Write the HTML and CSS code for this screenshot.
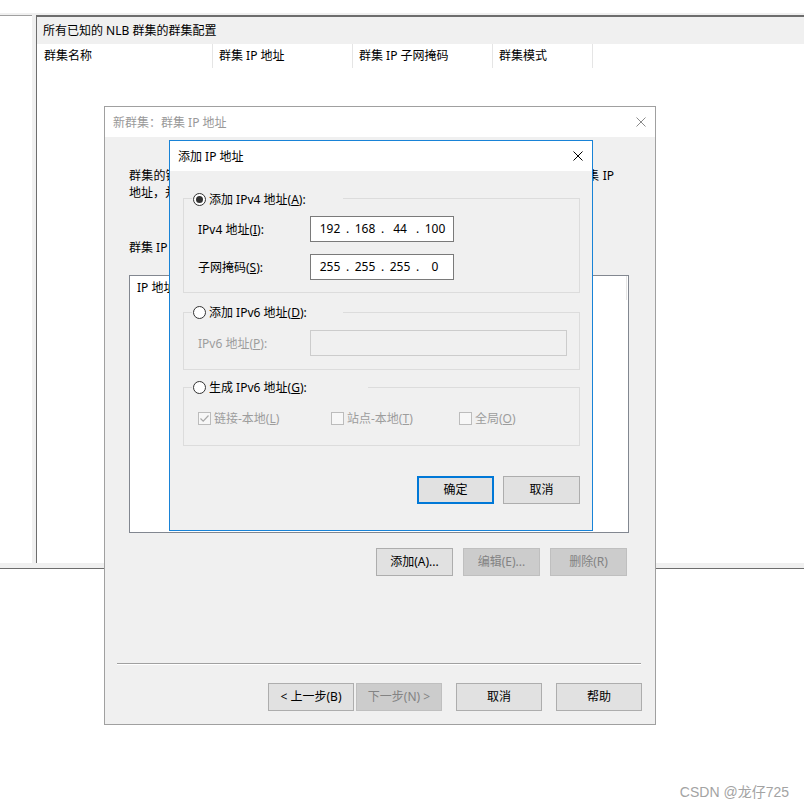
FILE: index.html
```html
<!DOCTYPE html>
<html lang="zh-CN">
<head>
<meta charset="utf-8">
<title>NLB</title>
<link rel="stylesheet" href="styles.css">
</head>
<body>
<div class="frame">
  <div class="side-pane"></div>
  <div class="main-pane">
    <div class="pane-title">所有已知的 NLB 群集的群集配置</div>
    <div class="col-head">
      <div class="col c1">群集名称</div>
      <div class="col c2">群集 IP 地址</div>
      <div class="col c3">群集 IP 子网掩码</div>
      <div class="col c4">群集模式</div>
    </div>
  </div>
</div>

<div class="wizard">
  <div class="wiz-title">
    <span>新群集：群集 IP 地址</span>
    <svg class="x-icon" width="10" height="10" viewBox="0 0 10 10"><path d="M0.5 0.5 L9.5 9.5 M9.5 0.5 L0.5 9.5" stroke="#8a8a8a" stroke-width="1" fill="none"/></svg>
  </div>
  <div class="wiz-body">
    <p class="intro">
      <span class="intro-l1">群集的链路负载平衡使用以下列出的所有 IP 地址，其中第一个地址将被用来作为主群集 IP</span>
      <span class="intro-l2">地址，并为其</span>
    </p>
    <div class="label-ip">群集 IP 地址(<u>I</u>):</div>
    <div class="list">
      <div class="list-head"><div class="list-col">IP 地址</div></div>
    </div>
    <div class="btn-row">
      <button class="btn">添加(A)...</button>
      <button class="btn disabled">编辑(E)...</button>
      <button class="btn disabled">删除(R)</button>
    </div>
  </div>
  <div class="wiz-footer">
    <div class="sep"></div>
    <div class="footer-btns">
      <button class="btn wide">&lt; 上一步(B)</button>
      <button class="btn wide disabled gap-s">下一步(N) &gt;</button>
      <button class="btn wide gap-l">取消</button>
      <button class="btn wide gap-l">帮助</button>
    </div>
  </div>
</div>

<div class="add-dialog">
  <div class="add-title">
    <span>添加 IP 地址</span>
    <svg class="x-icon" width="10" height="10" viewBox="0 0 10 10"><path d="M0.5 0.5 L9.5 9.5 M9.5 0.5 L0.5 9.5" stroke="#000" stroke-width="1" fill="none"/></svg>
  </div>
  <div class="add-body">
    <fieldset class="grp g1">
      <legend class="lg"><span class="radio-label"><span class="radio on"></span>添加 IPv4 地址(<u>A</u>):</span></legend>
      <div class="field-row">
        <div class="field-label">IPv4 地址(<u>I</u>):</div>
        <div class="ip-box">
          <span class="oct">192</span><span class="dot">.</span><span class="oct">168</span><span class="dot">.</span><span class="oct">44</span><span class="dot">.</span><span class="oct">100</span>
        </div>
      </div>
      <div class="field-row row2">
        <div class="field-label">子网掩码(<u>S</u>):</div>
        <div class="ip-box">
          <span class="oct">255</span><span class="dot">.</span><span class="oct">255</span><span class="dot">.</span><span class="oct">255</span><span class="dot">.</span><span class="oct">0</span>
        </div>
      </div>
    </fieldset>

    <fieldset class="grp g2">
      <legend class="lg"><span class="radio-label"><span class="radio"></span>添加 IPv6 地址(<u>D</u>):</span></legend>
      <div class="field-row">
        <div class="field-label dim">IPv6 地址(<u>P</u>):</div>
        <div class="ip6-box"></div>
      </div>
    </fieldset>

    <fieldset class="grp g3">
      <legend class="lg wide-lg"><span class="radio-label"><span class="radio"></span>生成 IPv6 地址(<u>G</u>):</span></legend>
      <div class="check-row">
        <div class="chk-item i1"><span class="chk"><svg width="11" height="11" viewBox="0 0 11 11"><path d="M1.5 5.5 L4.2 8.2 L9.5 2.5" stroke="#a8a8a8" stroke-width="1.2" fill="none"/></svg></span><span class="dim">链接-本地(<u>L</u>)</span></div>
        <div class="chk-item i2"><span class="chk"></span><span class="dim">站点-本地(<u>T</u>)</span></div>
        <div class="chk-item"><span class="chk"></span><span class="dim">全局(<u>O</u>)</span></div>
      </div>
    </fieldset>

    <div class="add-btns">
      <button class="btn focus">确定</button>
      <button class="btn">取消</button>
    </div>
  </div>
</div>

<div class="watermark">CSDN @龙仔725</div>
</body>
</html>
```

FILE: styles.css
```css
* { box-sizing: border-box; }
html, body { margin: 0; padding: 0; }
body {
  width: 804px;
  height: 808px;
  overflow: hidden;
  position: relative;
  background: #fff;
  font-family: "Noto Sans", "Noto Sans CJK SC", sans-serif;
  font-size: 12px;
  color: #000;
}
u { text-decoration: underline; text-underline-offset: 1px; }

/* background console */
.frame {
  margin-top: 13px;
  height: 556px;
  padding: 2px 0 5px;
  border-bottom: 1px solid #6d6d6d;
  background: #f0f0f0;
  display: flex;
  gap: 4px;
}
.side-pane {
  width: 32px;
  background: #fff;
  border-top: 1px solid #a0a0a0;
}
.main-pane {
  flex: 1;
  background: #fff;
  border-top: 2px solid #6d6d6d;
  border-left: 1px solid #6d6d6d;
}
.pane-title {
  height: 27px;
  line-height: 27px;
  padding-left: 6px;
  background: #f0f0f0;
}
.col-head { display: flex; height: 24px; }
.col {
  line-height: 24px;
  border-right: 1px solid #e5e5e5;
  padding-left: 6px;
  white-space: nowrap;
}
.c1 { width: 176px; padding-left: 7px; }
.c2 { width: 140px; }
.c3 { width: 140px; }
.c4 { width: 100px; }

/* wizard window */
.wizard {
  position: absolute;
  left: 104px;
  top: 106px;
  width: 552px;
  height: 619px;
  border: 1px solid #a0a0a0;
  background: #f0f0f0;
  display: flex;
  flex-direction: column;
}
.wiz-title {
  flex: none;
  height: 30px;
  background: #fff;
  color: #999;
  display: flex;
  align-items: center;
  justify-content: space-between;
  padding: 0 9px 0 8px;
}
.x-icon { display: block; }
.wiz-body {
  flex: 1;
  padding: 30px 0 0 24px;
}
.intro { margin: 0; width: 485px; line-height: 17px; }
.intro-l1 {
  display: block;
  white-space: nowrap;
  text-align: justify;
  text-align-last: justify;
}
.intro-l2 { display: block; white-space: nowrap; }
.label-ip { margin-top: 38px; line-height: 17px; }
.list {
  margin-top: 19px;
  width: 500px;
  height: 258px;
  border: 1px solid #828790;
  background: #fff;
}
.list-head { display: flex; height: 24px; }
.list-col {
  flex: 1;
  line-height: 24px;
  padding-left: 7px;
  border-right: 1px solid #e5e5e5;
  margin-right: 1px;
}
.btn-row {
  margin-top: 15px;
  width: 500px;
  padding-right: 2px;
  display: flex;
  justify-content: flex-end;
  gap: 10px;
}
.btn {
  width: 77px;
  height: 28px;
  padding: 0;
  margin: 0;
  border: 1px solid #adadad;
  background: #e1e1e1;
  font-family: inherit;
  font-size: 12px;
  line-height: 26px;
  color: #000;
  text-align: center;
}
.btn.disabled {
  background: #cccccc;
  border-color: #bfbfbf;
  color: #838383;
}
.btn.focus {
  border: 2px solid #0078d7;
  line-height: 24px;
}
.btn.wide { width: 86px; }
.gap-s { margin-left: 2px; }
.gap-l { margin-left: 14px; }

.wiz-footer {
  flex: none;
  padding: 0 13px 13px 12px;
}
.sep {
  height: 2px;
  margin-right: 1px;
  border-top: 1px solid #a0a0a0;
  border-bottom: 1px solid #fff;
}
.footer-btns {
  margin-top: 18px;
  display: flex;
  justify-content: flex-end;
}

/* add ip dialog */
.add-dialog {
  position: absolute;
  left: 169px;
  top: 140px;
  width: 424px;
  height: 391px;
  border: 1px solid #1883d7;
  background: #f0f0f0;
  display: flex;
  flex-direction: column;
}
.add-title {
  flex: none;
  height: 30px;
  background: #fff;
  display: flex;
  align-items: center;
  justify-content: space-between;
  padding: 0 9px 0 8px;
}
.add-body {
  flex: 1;
  padding: 19px 12px 0 13px;
}
.grp {
  margin: 0;
  min-width: 0;
  border: 1px solid #dcdcdc;
  padding: 9px 12px 12px 8px;
}
.g2 { margin-top: 11px; padding: 9px 12px 13px 8px; }
.g3 { margin-top: 9px; padding: 14px 12px 18px 8px; }
.lg {
  padding: 0 0 0 1px;
  width: 151px;
  height: 17px;
  line-height: 17px;
}
.wide-lg { width: 176px; }
.radio-label {
  display: inline-flex;
  align-items: center;
  height: 17px;
  white-space: nowrap;
}
.radio {
  width: 13px;
  height: 13px;
  border: 1px solid #333;
  border-radius: 50%;
  margin-right: 3px;
  background: #fff;
  display: inline-flex;
  align-items: center;
  justify-content: center;
}
.radio.on::after {
  content: "";
  width: 7px;
  height: 7px;
  border-radius: 50%;
  background: #333;
}
.field-row {
  display: flex;
  align-items: center;
  margin-left: 6px;
}
.row2 { margin-top: 12px; }
.field-label { width: 112px; line-height: 17px; white-space: nowrap; }
.dim { color: #9d9d9d; }
.ip-box {
  width: 144px;
  height: 26px;
  border: 1px solid #7a7a7a;
  background: #fff;
  display: flex;
  padding-left: 5px;
  line-height: 24px;
}
.oct { width: 28px; text-align: center; }
.dot { width: 7px; text-align: center; }
.ip6-box {
  width: 258px;
  height: 26px;
  border: 1px solid #cccccc;
  background: #f0f0f0;
}
.check-row {
  display: flex;
  margin-left: 6px;
  line-height: 17px;
}
.chk-item { display: flex; align-items: center; white-space: nowrap; }
.i1 { width: 133px; }
.i2 { width: 128px; }
.chk {
  width: 13px;
  height: 13px;
  border: 1px solid #bcbcbc;
  background: #f7f7f7;
  margin-right: 3px;
  display: inline-flex;
  align-items: center;
  justify-content: center;
}
.chk svg { display: block; }
.add-btns {
  margin-top: 30px;
  display: flex;
  justify-content: flex-end;
  gap: 9px;
}

.watermark {
  position: absolute;
  right: 15px;
  top: 784px;
  font-family: "Liberation Sans", "Noto Sans CJK SC", sans-serif;
  font-size: 14px;
  line-height: 16px;
  color: #a3a3a3;
}
```
